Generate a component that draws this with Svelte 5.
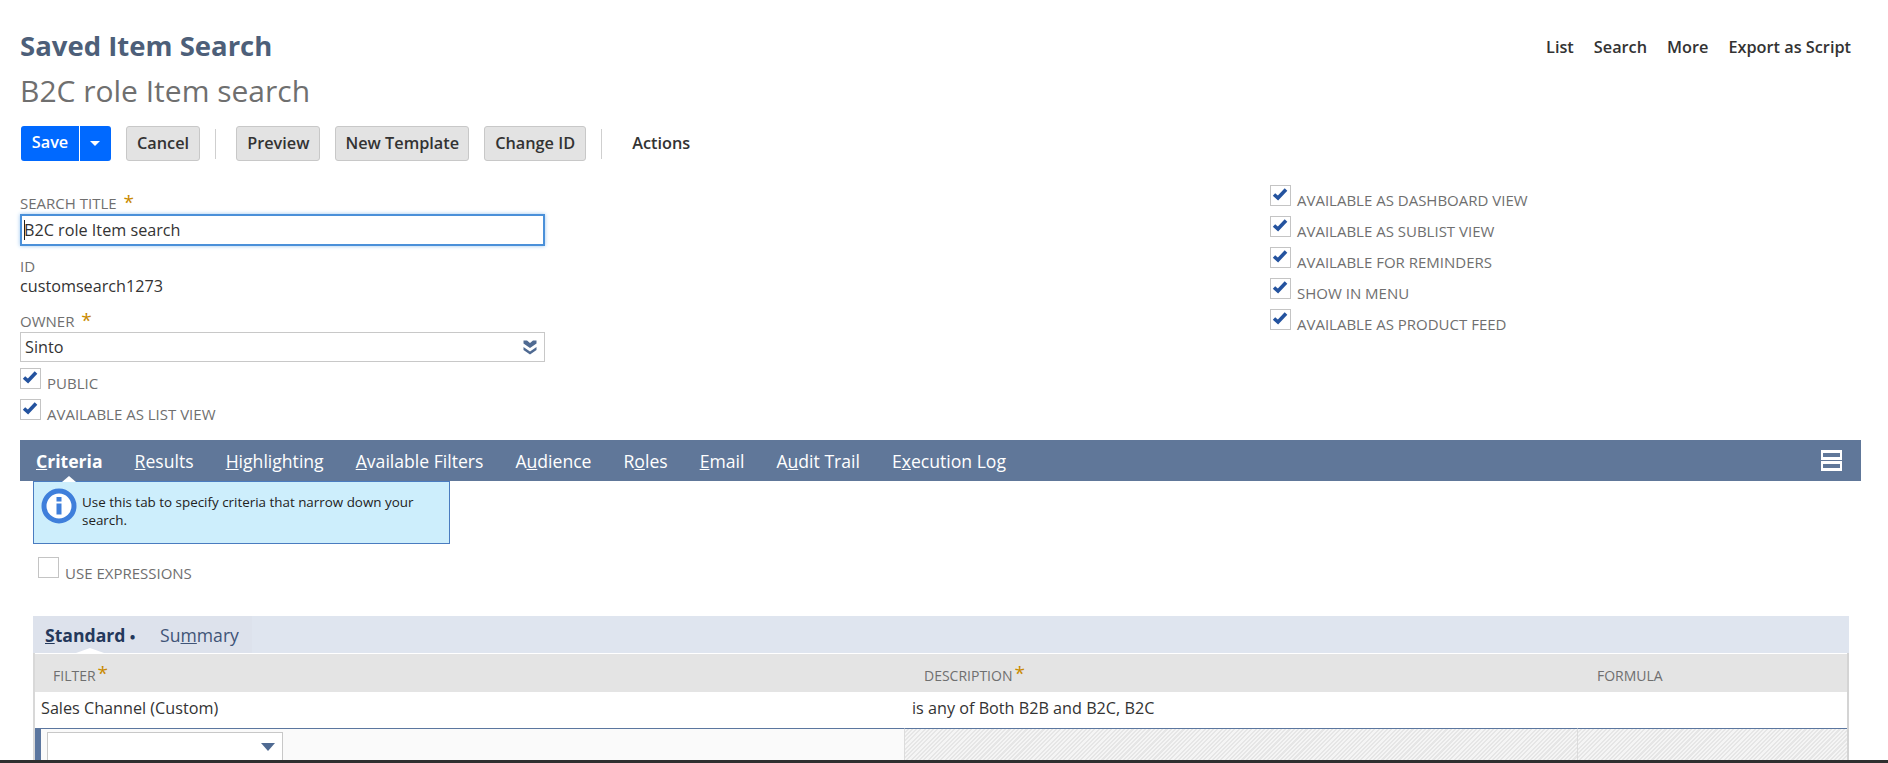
<script lang="ts">
	const topLinks = ['List', 'Search', 'More', 'Export as Script'];
	const rightChecks = [
		'AVAILABLE AS DASHBOARD VIEW',
		'AVAILABLE AS SUBLIST VIEW',
		'AVAILABLE FOR REMINDERS',
		'SHOW IN MENU',
		'AVAILABLE AS PRODUCT FEED'
	];
	const leftChecks = ['PUBLIC', 'AVAILABLE AS LIST VIEW'];
	// a = text before the underlined letter, k = that letter, b = the rest
	const tabs = [
		{ a: '', k: 'C', b: 'riteria', active: true },
		{ a: '', k: 'R', b: 'esults' },
		{ a: '', k: 'H', b: 'ighlighting' },
		{ a: '', k: 'A', b: 'vailable Filters' },
		{ a: 'A', k: 'u', b: 'dience' },
		{ a: 'R', k: 'o', b: 'les' },
		{ a: '', k: 'E', b: 'mail' },
		{ a: 'A', k: 'u', b: 'dit Trail' },
		{ a: 'E', k: 'x', b: 'ecution Log' }
	];
</script>

{#snippet check(label, on = true)}
	<label class="check">
		<span class="box">
			{#if on}
				<svg viewBox="0 0 21 21" width="21" height="21">
					<path d="M4 9.5 L8 13 L16 4.5" fill="none" stroke="#24539f" stroke-width="3.6" />
				</svg>
			{/if}
		</span>
		<span class="check-text">{label}</span>
	</label>
{/snippet}

<div class="page">
	<main class="main">
		<header class="head">
			<div>
				<h1 class="title">Saved Item Search</h1>
				<div class="subtitle">B2C role Item search</div>
			</div>
			<nav class="top-links">
				{#each topLinks as link}
					<span>{link}</span>
				{/each}
			</nav>
		</header>

		<div class="toolbar">
			<div class="save">
				<span class="save-label">Save</span>
				<span class="save-arrow"></span>
			</div>
			<button class="btn">Cancel</button>
			<span class="sep"></span>
			<button class="btn">Preview</button>
			<button class="btn template">New Template</button>
			<button class="btn">Change ID</button>
			<span class="sep sep-last"></span>
			<span class="actions">Actions</span>
		</div>

		<div class="form">
			<div class="form-left">
				<div class="label">SEARCH TITLE <span class="req">*</span></div>
				<div class="input"><span class="caret"></span>B2C role Item search</div>
				<div class="label id-label">ID</div>
				<div class="id-value">customsearch1273</div>
				<div class="label owner-label">OWNER <span class="req">*</span></div>
				<div class="select">
					<span>Sinto</span>
					<svg viewBox="0 0 14 15" width="14" height="15">
						<path d="M0.5 0.5 H4 L7 3 L10 0.5 H13.5 V3.5 L7 8 L0.5 3.5 Z M0.5 7 L7 11.5 L13.5 7 V10 L7 14.5 L0.5 10 Z" fill="#4f6a92" />
					</svg>
				</div>
				<div class="checks">
					{#each leftChecks as item}
						{@render check(item)}
					{/each}
				</div>
			</div>
			<div class="form-right">
				{#each rightChecks as item}
					{@render check(item)}
				{/each}
			</div>
		</div>

		<div class="tabbar">
			{#each tabs as tab}
				<span class="tab" class:active={tab.active}>{tab.a}<u>{tab.k}</u>{tab.b}</span>
			{/each}
			<span class="view-toggle"><i></i><i></i></span>
		</div>

		<div class="tab-body">
			<div class="help">
				<svg class="help-icon" viewBox="0 0 36 36" width="36" height="36">
					<circle cx="18" cy="18" r="15" fill="#fff" stroke="#3f7fdb" stroke-width="5" />
					<rect x="15.5" y="9" width="5" height="4.5" fill="#3f7fdb" />
					<rect x="15.5" y="15.5" width="5" height="11" fill="#3f7fdb" />
				</svg>
				<p>Use this tab to specify criteria that narrow down your search.</p>
			</div>

			<div class="expr">
				{@render check('USE EXPRESSIONS', false)}
			</div>

			<div class="subtabs">
				<div class="subtab-group">
					<span class="subtab current"><u>S</u>tandard <b>•</b></span>
					<span class="subtab">Su<u>m</u>mary</span>
				</div>
			</div>

			<div class="grid">
				<div class="cell hcell first">FILTER<span class="req small">*</span></div>
				<div class="cell hcell">DESCRIPTION<span class="req small">*</span></div>
				<div class="cell hcell">FORMULA</div>

				<div class="cell rcell">Sales Channel (Custom)</div>
				<div class="cell rcell">is any of Both B2B and B2C, B2C</div>
				<div class="cell rcell"></div>

				<div class="ecell ecell-first">
					<div class="edit-select"><span class="edit-arrow"></span></div>
				</div>
				<div class="ecell hatch"></div>
				<div class="ecell hatch"></div>
			</div>
		</div>
	</main>
	<div class="footer-bar"></div>
</div>

<style>
	:global(body) {
		margin: 0;
		background: #fff;
	}

	.page {
		height: 763px;
		display: flex;
		flex-direction: column;
		overflow: hidden;
		font-family: 'Open Sans', 'Liberation Sans', sans-serif;
		color: #333;
	}

	.main {
		flex: 1;
		min-height: 0;
		overflow: hidden;
		padding: 0 27px 0 20px;
	}

	.footer-bar {
		height: 3px;
		background: #2f2f2f;
	}

	.head {
		display: flex;
		justify-content: space-between;
		align-items: flex-start;
		padding-top: 27px;
	}

	.title {
		margin: 0;
		font-size: 27.5px;
		line-height: 37px;
		font-weight: 700;
		color: #4d5f79;
	}

	.subtitle {
		margin-top: 8px;
		font-size: 30px;
		line-height: 38px;
		color: #6f6f6f;
	}

	.top-links {
		display: flex;
		gap: 20px;
		padding: 10px 10px 0 0;
		font-size: 16.3px;
		line-height: 20px;
		font-weight: 600;
		color: #333;
	}

	.toolbar {
		display: flex;
		align-items: center;
		gap: 15px;
		margin-top: 16px;
		padding-left: 1px;
		height: 35px;
	}

	.save {
		display: flex;
		width: 90px;
		height: 35px;
		border-radius: 3px;
		background: #0069ff;
		color: #fff;
		font-size: 16.3px;
		font-weight: 600;
	}

	.save-label {
		width: 58px;
		line-height: 33px;
		text-align: center;
		border-right: 1px solid #fff;
	}

	.save-arrow {
		flex: 1;
		position: relative;
	}

	.save-arrow::after {
		content: '';
		position: absolute;
		left: 10px;
		top: 15px;
		border: 5px solid transparent;
		border-top: 5px solid #fff;
		border-bottom: 0;
	}

	.btn {
		height: 35px;
		padding: 0 10px 2px;
		border: 1px solid #c8c8c8;
		border-radius: 3px;
		background: #e3e3e3;
		font-family: inherit;
		font-size: 16.3px;
		font-weight: 600;
		color: #333;
	}

	.btn.template {
		padding: 0 9px 2px;
	}

	.sep {
		width: 1px;
		height: 30px;
		background: #cfcfcf;
		margin: 0 5px 0 0;
	}

	.sep-last {
		margin-right: 15px;
	}

	.actions {
		font-size: 16.3px;
		font-weight: 600;
		color: #333;
		padding-bottom: 2px;
	}

	.form {
		display: grid;
		grid-template-columns: 1250px 1fr;
	}

	.form-left {
		width: 525px;
		padding-top: 33px;
	}

	.form-right {
		padding-top: 24px;
	}

	.label {
		font-size: 15px;
		line-height: 19px;
		color: #6f6f6f;
	}

	.req {
		color: #c98a00;
		font-size: 19px;
		line-height: 14px;
		margin-left: 3px;
	}

	.req.small {
		margin-left: 2px;
		position: relative;
		top: -3px;
	}

	.input {
		margin-top: 1px;
		height: 32px;
		box-sizing: border-box;
		border: 2px solid #4a90d9;
		box-shadow: 0 0 4px #9cc6ef;
		padding-left: 2px;
		font-size: 16.2px;
		line-height: 28px;
		color: #333;
		display: flex;
		align-items: center;
	}

	.caret {
		width: 1px;
		height: 20px;
		background: #222;
		margin-right: -1px;
	}

	.id-label {
		margin-top: 11px;
	}

	.id-value {
		font-size: 16.2px;
		line-height: 20px;
		color: #333;
	}

	.owner-label {
		margin-top: 16px;
	}

	.select {
		margin-top: 1px;
		height: 30px;
		box-sizing: border-box;
		border: 1px solid #c8c8c8;
		padding: 0 7px 0 4px;
		display: flex;
		align-items: center;
		justify-content: space-between;
		font-size: 16.2px;
		color: #333;
	}

	.checks {
		padding-top: 6px;
	}

	.check {
		display: flex;
		align-items: flex-start;
		height: 31px;
	}

	.box {
		width: 21px;
		height: 21px;
		box-sizing: border-box;
		border: 1px solid #c4c4c4;
		background: #fff;
		flex: none;
		display: block;
	}

	.box svg {
		display: block;
		margin: -1px;
	}

	.check-text {
		margin: 6px 0 0 6px;
		font-size: 15px;
		line-height: 19px;
		color: #6f6f6f;
	}

	.expr .check-text {
		margin-top: 7px;
	}

	.tabbar {
		display: flex;
		align-items: center;
		position: relative;
		gap: 32px;
		height: 41px;
		margin-top: 10px;
		padding-left: 16px;
		background: #607799;
		font-size: 17.6px;
		color: #fff;
	}

	.tab {
		position: relative;
	}

	.tab.active {
		font-weight: 700;
	}

	.tab.active::after {
		content: '';
		position: absolute;
		left: 26px;
		bottom: -9px;
		border: 7px solid transparent;
		border-bottom: 6px solid #fff;
		border-top: 0;
	}

	.view-toggle {
		margin-left: auto;
		margin-right: 19px;
		display: flex;
		flex-direction: column;
		gap: 1px;
	}

	.view-toggle i {
		display: block;
		width: 21px;
		height: 10px;
		box-sizing: border-box;
		border: 2px solid #fff;
		border-width: 3px 2px;
		background: #607799;
	}

	.tab-body {
		padding: 0 12px 0 13px;
	}

	.help {
		width: 417px;
		height: 63px;
		box-sizing: border-box;
		border: 1px solid #4a7cc0;
		background: #cdeefc;
		display: flex;
		align-items: flex-start;
		padding: 6px 8px 0 7px;
		gap: 5px;
	}

	.help-icon {
		flex: none;
	}

	.help p {
		margin: 5px 0 0;
		font-size: 13.4px;
		line-height: 18px;
		color: #222;
	}

	.expr {
		margin: 13px 0 0 5px;
		height: 59px;
	}

	.subtabs {
		height: 37px;
		background: #dfe5ef;
	}

	.subtab-group {
		display: inline-flex;
		gap: 25px;
		width: 219px;
		height: 37px;
		box-sizing: border-box;
		align-items: center;
		padding-left: 12px;
		background: #dde2ec;
		font-size: 17.6px;
		color: #3f5477;
		position: relative;
	}

	.subtab.current {
		font-weight: 700;
		color: #24385b;
	}

	.subtab.current b {
		font-size: 13px;
	}

	.subtab.current::after {
		content: '';
		position: absolute;
		left: 43px;
		bottom: 0;
		border: 14px solid transparent;
		border-bottom: 5px solid #fff;
		border-top: 0;
	}

	.grid {
		display: grid;
		grid-template-columns: 869px 673px 1fr;
		grid-template-rows: 39px 36px 32px;
		margin: 0 0 0 2px;
		border-right: 2px solid #d4d4d4;
		box-shadow: -2px 0 0 #d8d8d8;
		width: 1812px;
		box-sizing: content-box;
	}

	.cell {
		display: flex;
		align-items: center;
		box-sizing: border-box;
	}

	.hcell {
		background: #e4e4e4;
		padding-left: 20px;
		padding-top: 5px;
		font-size: 14px;
		color: #6f6f6f;
		margin-top: 1px;
	}

	.hcell.first {
		padding-left: 18px;
	}

	.rcell {
		padding-left: 8px;
		padding-bottom: 5px;
		font-size: 16.2px;
		color: #333;
	}

	.rcell:nth-child(4) {
		padding-left: 6px;
	}

	.ecell {
		border-top: 1px solid #5b769f;
		box-sizing: border-box;
	}

	.ecell-first {
		border-left: 6px solid #5b769f;
		background: #fafafa;
		padding: 3px 0 0 6px;
	}

	.hatch {
		border-left: 1px solid #dcdcdc;
		background: repeating-linear-gradient(135deg, #f5f5f5 0 1.5px, #e6e6e6 1.5px 3px);
	}

	.edit-select {
		width: 236px;
		height: 36px;
		box-sizing: border-box;
		border: 1px solid #c8c8c8;
		background: #fff;
		position: relative;
	}

	.edit-arrow {
		position: absolute;
		right: 7px;
		top: 10px;
		border: 7.5px solid transparent;
		border-top: 8px solid #4f6a92;
		border-bottom: 0;
	}
</style>
